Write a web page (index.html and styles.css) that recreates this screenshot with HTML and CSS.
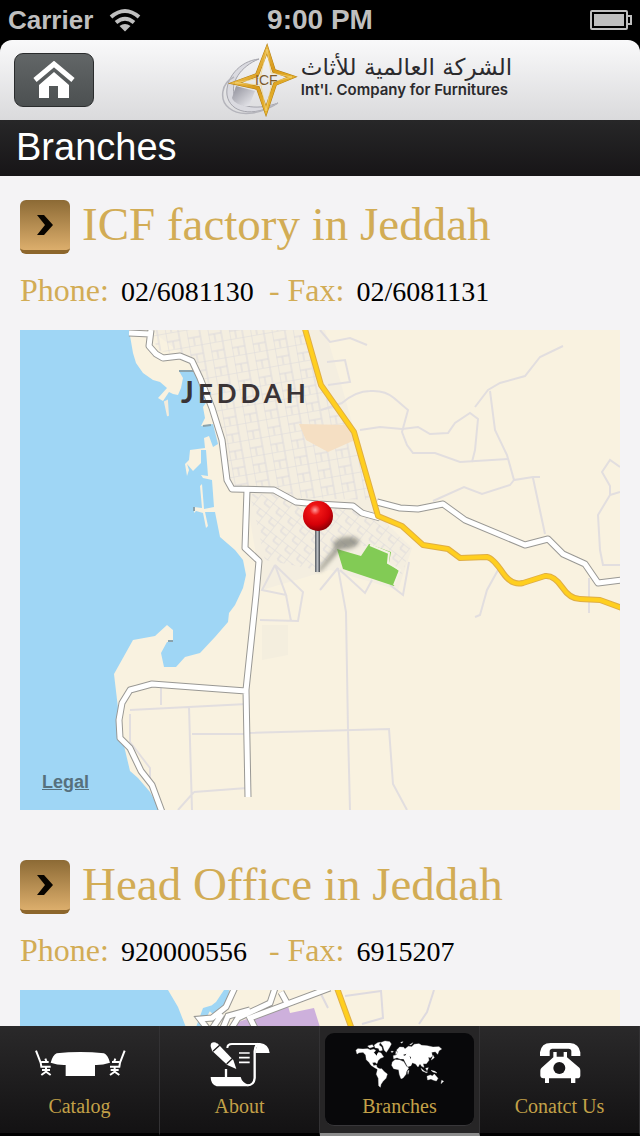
FILE: index.html
```html
<!DOCTYPE html>
<html lang="en">
<head>
  <meta charset="UTF-8">
  <meta name="viewport" content="width=device-width, initial-scale=1.0">
  <title>Branches</title>
  <link rel="stylesheet" href="styles.css">
</head>
<body>
  <div class="status-bar">
    <div class="carrier">
      <span>Carrier</span>
      <svg width="32" height="24" viewBox="0 0 32 24">
        <g fill="none" stroke="#bfbfbf" stroke-width="4">
          <path d="M2 9Q16 -3 30 9"/>
          <path d="M7 14.500Q16 7 25 14.500"/>
        </g>
        <path d="M10.500 18Q16 14 21.500 18L16 23.500Z" fill="#bfbfbf"/>
      </svg>
    </div>
    <div class="time">9:00 PM</div>
    <div class="battery">
      <svg width="42" height="20" viewBox="0 0 42 20">
        <rect x="1" y="1" width="36" height="18" rx="1" fill="none" stroke="#bfbfbf" stroke-width="2"/>
        <rect x="4" y="4" width="30" height="12" fill="#bfbfbf"/>
        <path d="M38 6h3v8h-3" fill="none" stroke="#bfbfbf" stroke-width="2"/>
      </svg>
    </div>
  </div>

  <header>
    <button class="home-button" aria-label="Home">
      <svg width="42" height="38" viewBox="0 0 42 38">
        <path d="M2 19L21 3L40 19" fill="none" stroke="#fff" stroke-width="5"/>
        <path d="M21 11L36 24V37H25V25H16V37H6V24Z" fill="#fff"/>
      </svg>
    </button>
    <div class="logo">
      <svg width="78" height="78" viewBox="219 42 78 78">
        <defs>
          <linearGradient id="gold" x1="0" y1="0" x2="1" y2="1">
            <stop offset="0" stop-color="#f8d66a"/>
            <stop offset="0.5" stop-color="#d99a1a"/>
            <stop offset="1" stop-color="#f0c63c"/>
          </linearGradient>
          <linearGradient id="silver" x1="0" y1="0" x2="1" y2="1">
            <stop offset="0" stop-color="#8d8d98"/>
            <stop offset="1" stop-color="#f1f1f5"/>
          </linearGradient>
        </defs>
        <path d="M258 60C238 62 224 80 226 96C229 114 252 119 277 104C258 111 238 109 234 98C228 84 240 67 258 60Z" fill="#dadae0" stroke="#a5a5ad" stroke-width="1"/>
        <path d="M233 78C220 84 218 101 228 109C240 119 262 114 277 104" fill="none" stroke="#b4b4bb" stroke-width="1.500"/>
        <path d="M235 87L254 92L248 107C241 108 233 104 231 99Z" fill="url(#silver)"/>
        <path d="M266 50L273 72L291 78L274 85L265 112L257 89L234 84L256 76Z" fill="none" stroke="#b07c12" stroke-width="4"/>
        <path d="M266 50L273 72L291 78L274 85L265 112L257 89L234 84L256 76Z" fill="none" stroke="url(#gold)" stroke-width="3"/>
        <path d="M266 50L270 74L291 78L271 83L265 112L260 86L234 84L259 79Z" fill="none" stroke="#f3d67c" stroke-width="0.700"/>
        <text x="254" y="86" class="logo-mark">ICF</text>
      </svg>
      <div class="logo-text">
        <div class="logo-arabic" lang="ar" dir="rtl">الشركة العالمية للأثاث</div>
        <div class="logo-english">Int'l. Company for Furnitures</div>
      </div>
    </div>
  </header>

  <h1>Branches</h1>

  <main>
    <section class="branch">
      <div class="branch-head">
        <button class="open-button" aria-label="Open ICF factory in Jeddah">
          <svg width="18" height="20" viewBox="0 0 18 20"><path d="M1 0H8L17 10L8 20H1L9 10Z" fill="#080500"/></svg>
        </button>
        <h2>ICF factory in Jeddah</h2>
      </div>
      <p class="contact">
        <span>Phone:</span> <span class="number">02/6081130</span>
        <span>- Fax:</span> <span class="number">02/6081131</span>
      </p>
      <div class="map">
        <svg class="map-drawing" viewBox="20 330 600 480" preserveAspectRatio="xMidYMid slice">
          <defs>
            <pattern id="blocks" width="21" height="17" patternUnits="userSpaceOnUse" patternTransform="rotate(-10)">
              <path d="M0 0H21M0 0V17M0 9H13M13 0V17M6 9V17" fill="none" stroke="#dcd9dc" stroke-width="1"/>
            </pattern>
            <pattern id="lanes" width="15" height="12" patternUnits="userSpaceOnUse" patternTransform="rotate(38)">
              <path d="M0 0H15M0 0V12M8 0V6H15" fill="none" stroke="#dcd9dc" stroke-width="1"/>
            </pattern>
            <radialGradient id="pinHead" cx="0.4" cy="0.3" r="0.7">
              <stop offset="0" stop-color="#ff9c9c"/>
              <stop offset="0.25" stop-color="#ef1515"/>
              <stop offset="0.7" stop-color="#d40008"/>
              <stop offset="1" stop-color="#8f0006"/>
            </radialGradient>
            <linearGradient id="pinStem" x1="0" x2="1">
              <stop offset="0" stop-color="#555a60"/>
              <stop offset="0.5" stop-color="#b9bdc2"/>
              <stop offset="1" stop-color="#44484d"/>
            </linearGradient>
            <filter id="soft"><feGaussianBlur stdDeviation="2"/></filter>
          </defs>
          <rect x="20" y="330" width="600" height="480" fill="#f9f2e0"/>
          <!-- built up area -->
          <path d="M150 330H325L340 380L378 515L412 548L398 590L330 570L262 590L245 490L228 485L205 390L192 361Z" fill="#f4eee0"/>
          <path d="M152 330H308L322 385L354 432L376 500L296 498L274 488L232 487L222 440L205 385L192 358L157 350Z" fill="url(#blocks)"/>
          <path d="M250 494H274L300 506L356 508L385 522L410 548L402 575L375 545L340 548L318 570L265 560Z" fill="url(#lanes)"/>
          <path d="M299 424L350 425L355 440L328 452L306 440Z" fill="#f5dfc3"/>
          <path d="M262 625H288V655L262 660Z" fill="#f4eede"/>
          <!-- sea -->
          <path d="M20 330H129L133 353L136 363L143 373L153 380L160 382L167 388L158 398L163 401L169 392L173 394L178 395L181 388L183 378L179 371H195L203 386L208 400L203 407L205 418L201 426L213 424L218 444L213 447L209 436L204 438L205 448L190 450L189 460L185 464L187 476L189 470L187 464L193 471L201 463L201 450L206 450L208 476L201 475L203 478L212 480L214 507L204 509L202 484L200 486L202 508L194 507V513L196 511L203 513L206 528L208 526L205 512L215 512L220 537L235 550L243 560L246 575L243 588L235 605L229 613L228 622L215 637L200 653L185 657L176 667H164L161 653L167 642H173V630L167 625L155 636L133 640L114 674L118 708L121 733L130 771L138 778L150 792L160 810H20Z" fill="#9fd6f5"/>
          <path d="M165 402L168 416L167 401Z" fill="#f3ecdc" stroke="#f3ecdc" stroke-width="2"/>
          <path d="M179 371H195M194 511V507M203 426L211 425M168 641H173" fill="none" stroke="#8ba3ad" stroke-width="2"/>
          <!-- minor roads -->
          <g fill="none" stroke="#e2dedf" stroke-width="2">
            <path d="M320 330L330 342L350 338L367 345M327 362L345 360L350 382L328 385M321 410L342 403Q356 391 370 391Q385 390 394 398L408 410L402 432L407 445L413 453L435 453L460 462L508 459"/>
            <path d="M360 430L380 427L402 429L418 427L430 434L448 433L455 423L470 413L478 419L475 450L472 462M475 407L488 390L500 383L525 376L540 357L563 346M490 391L495 430L507 455L514 480L533 477L540 477M514 480L510 485L482 494L464 487L433 501M533 478L545 534"/>
            <path d="M620 467L610 460L602 472L610 486V495L598 515L600 550L603 565H620M610 495L620 492M589 578V613M498 570L487 590L480 615L475 617"/>
            <path d="M338 568L346 612L348 730L350 810M338 568L320 590M340 570L365 593L372 580M390 585L403 595L409 562M247 733L389 729L393 784L407 810"/>
            <path d="M247 704L130 710M161 686V705M189 707L192 810M192 734H247M194 792L247 788M194 792L178 810M130 714V742L150 768V785M275 565L262 590L286 595L275 565L303 592L298 621L260 620M286 595L291 621"/>
          </g>
          <!-- park -->
          <path d="M337 549L361 556L369 544L391 552L389 563L399 571L394 586L343 569Z" fill="#82cb55"/>
          <path d="M370 545L389 553L388 563L400 570L394 585" fill="none" stroke="#f6f2e4" stroke-width="2"/>
          <!-- main roads -->
          <g fill="none" stroke="#999894" stroke-width="7" stroke-linejoin="round">
            <path d="M129 333L150 334M151 330L149 346L156 354L163 358L180 356L192 361L200 378L212 408L222 440L227 480L232 489L274 490L296 502L318 504L353 506L362 513L380 518"/>
            <path d="M247 490L245 548L259 561L256 595L246 690L248 797M246 691L152 684L130 690L122 703L119 720L120 738L130 748L141 771L152 785L162 812"/>
            <path d="M377 502L400 508L418 509L443 504L465 520L525 545L548 539L563 554L585 564L598 583L622 580"/>
          </g>
          <g fill="none" stroke="#fff" stroke-width="5" stroke-linejoin="round">
            <path d="M129 333L150 334M151 330L149 346L156 354L163 358L180 356L192 361L200 378L212 408L222 440L227 480L232 489L274 490L296 502L318 504L353 506L362 513L380 518"/>
            <path d="M247 490L245 548L259 561L256 595L246 690L248 797M246 691L152 684L130 690L122 703L119 720L120 738L130 748L141 771L152 785L162 812"/>
            <path d="M377 502L400 508L418 509L443 504L465 520L525 545L548 539L563 554L585 564L598 583L622 580"/>
          </g>
          <g fill="none" stroke-linejoin="round">
            <path d="M305 329L321 385L354 432L378 516L402 526L423 545L448 549L460 558L487 557Q493 558 503 573Q512 586 523 583L545 576Q554 575 562 587Q570 599 580 599L600 600L622 608" stroke="#dfae45" stroke-width="6"/>
            <path d="M305 329L321 385L354 432L378 516L402 526L423 545L448 549L460 558L487 557Q493 558 503 573Q512 586 523 583L545 576Q554 575 562 587Q570 599 580 599L600 600L622 608" stroke="#ffcf1f" stroke-width="4"/>
          </g>
          <!-- pin -->
          <g filter="url(#soft)" fill="#66675f" opacity="0.6">
            <ellipse cx="346" cy="543" rx="13" ry="6" transform="rotate(-8 346 543)"/>
            <path d="M317 571L337 545L343 547L321 571Z"/>
          </g>
          <rect x="315" y="528" width="5" height="44" fill="url(#pinStem)"/>
          <circle cx="318" cy="516" r="15" fill="url(#pinHead)"/>
          <text x="181" y="403" class="city"><tspan class="city-initial">J</tspan>EDDAH</text>
        </svg>
        <a class="legal" href="#legal">Legal</a>
      </div>
    </section>

    <section class="branch">
      <div class="branch-head">
        <button class="open-button" aria-label="Open Head Office in Jeddah">
          <svg width="18" height="20" viewBox="0 0 18 20"><path d="M1 0H8L17 10L8 20H1L9 10Z" fill="#080500"/></svg>
        </button>
        <h2>Head Office in Jeddah</h2>
      </div>
      <p class="contact">
        <span>Phone:</span> <span class="number">920000556</span>
        <span>- Fax:</span> <span class="number">6915207</span>
      </p>
      <div class="map">
        <svg class="map-drawing" viewBox="20 990 600 480" preserveAspectRatio="xMidYMid slice">
          <rect x="20" y="990" width="600" height="480" fill="#f9f2e0"/>
          <path d="M20 990H168L178 1007L187 1030L230 1470H20ZM224 990H229L228 1004L213 1014L207 1009L216 1002ZM203 1008L213 1005L200 1030H195Z" fill="#9fd6f5"/>
          <path d="M250 1018L288 1006L290 1013L314 1008L324 1040H230L238 1022Z" fill="#cdb0dc"/>
          <path d="M345 996L381 991L383 1018L362 1024M434 990L427 1012L419 1024M320 992L328 1008" fill="none" stroke="#dedadf" stroke-width="2"/>
          <path d="M236 985L226 1007L212 1018L200 1019L210 1032L222 1014M276 985L270 1003L238 1018L228 1034M330 988L250 1018L258 1034M281 992L287 1003M250 1010L228 1016L222 1030" fill="none" stroke="#999894" stroke-width="7"/>
          <path d="M236 985L226 1007L212 1018L200 1019L210 1032L222 1014M276 985L270 1003L238 1018L228 1034M330 988L250 1018L258 1034M281 992L287 1003M250 1010L228 1016L222 1030" fill="none" stroke="#fff" stroke-width="5"/>
          <path d="M337 988L354 1035L380 1130" fill="none" stroke="#dfae45" stroke-width="6"/>
          <path d="M337 988L354 1035L380 1130" fill="none" stroke="#ffcf1f" stroke-width="4"/>
        </svg>
      </div>
    </section>
  </main>

  <nav>
    <a class="tab" href="#catalog">
      <svg width="92" height="48" viewBox="102 180 276 144">
        <path d="M152 248Q158 226 170 220Q240 212 312 220Q324 226 330 248Q306 256 285 255V288H197V255Q174 256 152 248Z" fill="#fff"/>
        <g fill="none" stroke="#fff" stroke-width="6">
          <path d="M108 212L122 248L124 260H152M124 246H146M136 236L140 246M138 260V276M126 270H150M124 285L138 275L152 285"/>
          <path d="M374 212L360 248L358 260H330M358 246H336M346 236L342 246M344 260V276M332 270H356M358 285L344 275L330 285"/>
        </g>
      </svg>
      <span>Catalog</span>
    </a>
    <a class="tab" href="#about">
      <svg width="60" height="48" viewBox="640 176 180 144">
        <path d="M692 200Q692 188 706 188H790" fill="none" stroke="#fff" stroke-width="6"/>
        <path d="M770 185H790Q816 188 819 215H776Q778 192 790 186Z" fill="#fff"/>
        <path d="M784 187Q774 196 774 210V290Q772 312 752 312" fill="none" stroke="#fff" stroke-width="7"/>
        <path d="M642 287H732Q736 304 756 310L752 315H660Q642 310 642 287Z" fill="#fff"/>
        <path d="M727 215H759M727 229H759M727 243H759" stroke="#fff" stroke-width="5"/>
        <path d="M644 200L662 186L710 236L719 263L692 251L646 208Z" fill="#fff"/>
        <circle cx="652" cy="193" r="10" fill="#fff"/>
        <path d="M649 210L669 192M690 248L708 231" stroke="#1d1c1d" stroke-width="4"/>
        <path d="M688 263V290" stroke="#fff" stroke-width="7"/>
      </svg>
      <span>About</span>
    </a>
    <a class="tab active" href="#branches">
      <svg width="90" height="48" viewBox="104 185 270 144">
        <g fill="#fff" stroke="#fff" stroke-width="1">
          <!-- americas -->
          <path d="M107 216L112 211L128 212L142 211L150 215L160 213L166 216L162 222L168 230L175 222L182 224L190 236L180 240L173 247L170 256L164 252L156 253L160 262L168 260L170 267L178 272L174 274L163 268L152 261L146 252L138 244L136 230L128 222L116 223L110 227Z"/>
          <path d="M142 203L156 199L160 205L148 209ZM162 200L172 193L180 192L176 200L184 206L186 216L178 218L174 210L164 208Z"/>
          <path d="M180 193L194 188L208 190L213 197L206 210L198 222L192 216L188 203Z"/>
          <path d="M172 272L184 271L192 280L201 287L197 300L188 309L182 318L180 327L175 322L174 300L168 288Z"/>
          <!-- africa and eurasia -->
          <path d="M216 251L224 244L238 245L250 250L258 264L265 269L258 280L257 288L248 299L242 301L237 288L235 274L220 271L214 261Z"/>
          <path d="M220 241L219 232L228 230L232 222L229 215L238 206L250 207L254 212L264 204L274 205L282 198L296 196L304 201L320 202L338 206L356 205L364 212L356 217L352 228L345 220L334 222L336 233L330 238L324 236L326 246L318 256L308 256L311 267L304 264L299 256L293 266L286 257L276 253L272 262L262 265L254 250L250 242L240 242L230 238Z"/>
          <path d="M227 218L232 224L226 228ZM241 192L248 190L244 195ZM268 199L278 193L272 200ZM212 219H219L215 223ZM262 279L266 276L263 288ZM338 231L342 238L333 245ZM302 270L314 280L322 281L318 283L306 278ZM316 270L324 268L320 277ZM332 276L344 279L350 284L338 281Z"/>
          <path d="M320 294L330 290L336 293L342 287L347 293L353 300L348 308L338 305L332 302L322 305ZM364 306L370 309L362 316Z"/>
        </g>
        <path d="M248 230L258 226L254 232ZM268 232L272 238L270 242ZM160 222L170 221L170 232Z" fill="#060608"/>
      </svg>
      <span>Branches</span>
    </a>
    <a class="tab" href="#contact">
      <svg width="42" height="48" viewBox="647 183 126 144">
        <path d="M650 231V220Q654 192 682 192H740Q767 194 771 220V231H744V215Q743 209 736 209H686Q680 210 679 215V231Z" fill="#fff"/>
        <path d="M690 219H700V233H721V219H731V235L768 266Q771 269 771 275V290Q770 298 762 298H756V312H743V298H677V312H665V298H659Q651 297 651 290V275Q651 269 655 266L690 235Z" fill="#fff"/>
        <circle cx="708" cy="267" r="18" fill="#19181a"/>
      </svg>
      <span>Conatct Us</span>
    </a>
  </nav>
</body>
</html>
```
FILE: styles.css
```css
* {
  box-sizing: border-box;
}

body {
  margin: 0;
  height: 100vh;
  display: flex;
  flex-direction: column;
  background-color: #000;
  font-family: "Liberation Sans", Arial, sans-serif;
}

button {
  padding: 0;
  cursor: pointer;
}

/* Status bar */
.status-bar {
  flex: none;
  display: grid;
  grid-template-columns: 1fr auto 1fr;
  align-items: center;
  height: 40px;
  padding: 0 8px;
  color: #bfbfbf;
  font-size: 26px;
  font-weight: bold;
}

.carrier {
  display: flex;
  align-items: center;
  gap: 16px;
}

.time {
  font-size: 28px;
}

.battery {
  display: flex;
  justify-content: flex-end;
}

/* Header */
header {
  flex: none;
  display: grid;
  grid-template-columns: 1fr auto 1fr;
  align-items: center;
  height: 80px;
  padding: 0 14px;
  background: linear-gradient(#f9f9fa, #dadadc);
  border-radius: 12px 12px 0 0;
}

.home-button {
  display: flex;
  align-items: center;
  justify-content: center;
  width: 80px;
  height: 54px;
  background: linear-gradient(#626667, #4c5051);
  border: 1px solid #2a2c2d;
  border-radius: 9px;
}

.logo {
  display: flex;
  align-items: center;
  margin-left: 92px;
}

.logo-mark {
  font-size: 14px;
  fill: #7d5a2a;
}

.logo-text {
  padding-left: 3px;
  color: #2b2a2d;
  white-space: nowrap;
}

.logo-arabic {
  font-family: "DejaVu Sans", sans-serif;
  font-size: 23px;
  line-height: 28px;
}

.logo-english {
  font-family: Inter, sans-serif;
  font-size: 15px;
  font-weight: 600;
  line-height: 18px;
  padding-bottom: 8px;
}

h1 {
  flex: none;
  margin: 0;
  padding: 0 16px;
  height: 56px;
  line-height: 54px;
  font-size: 38px;
  font-weight: normal;
  color: #fff;
  background: linear-gradient(#272728, #171517);
}

/* Branch list */
main {
  flex: 1;
  min-height: 0;
  overflow-y: auto;
  scrollbar-width: none;
  padding: 24px 20px;
  background-color: #f4f3f5;
  font-family: "Liberation Serif", serif;
  color: #d2ac55;
}

.branch {
  margin-bottom: 50px;
}

.branch-head {
  display: flex;
  align-items: flex-start;
  gap: 12px;
  height: 54px;
}

.open-button {
  flex: none;
  display: flex;
  align-items: center;
  justify-content: center;
  width: 50px;
  height: 54px;
  background: linear-gradient(#8c6a35, #dcae6c);
  border: none;
  border-bottom: 4px solid #8d662c;
  border-radius: 6px;
}

h2 {
  margin: 0;
  font-size: 47px;
  font-weight: normal;
  line-height: 48px;
}

.contact {
  display: flex;
  align-items: baseline;
  height: 40px;
  margin: 16px 0 20px;
  font-size: 32px;
  line-height: 40px;
}

.number {
  min-width: 148px;
  margin-left: 12px;
  font-size: 28px;
  color: #000;
}

/* Map */
.map {
  position: relative;
  aspect-ratio: 5 / 4;
}

.map-drawing {
  display: block;
  width: 100%;
  height: 100%;
}

.city {
  font-family: Lato, sans-serif;
  font-size: 26px;
  font-weight: bold;
  letter-spacing: 4px;
  fill: #3a3335;
}

.city-initial {
  font-size: 30px;
}

.legal {
  position: absolute;
  left: 22px;
  bottom: 18px;
  font-family: "Liberation Sans", Arial, sans-serif;
  font-size: 18px;
  font-weight: bold;
  line-height: 20px;
  color: #56707d;
}

/* Tab bar */
nav {
  flex: none;
  display: grid;
  grid-template-columns: repeat(4, 1fr);
  height: 110px;
}

.tab {
  display: flex;
  flex-direction: column;
  align-items: center;
  gap: 4px;
  padding-top: 14px;
  background: linear-gradient(#2a292a, #131213);
  border-right: 1px solid #333234;
  border-bottom: 3px solid #000;
  font-family: "Liberation Serif", serif;
  font-size: 20px;
  line-height: 28px;
  color: #c3a148;
  text-decoration: none;
}

.tab.active {
  position: relative;
  z-index: 0;
  background: #262526;
  border-bottom-color: #8b8b8b;
}

/* dark plate behind the selected tab */
.tab.active::before {
  content: "";
  position: absolute;
  z-index: -1;
  inset: 7px 5px;
  background-color: #08080a;
  border-bottom: 1px solid #38373a;
  border-radius: 9px;
}
```
